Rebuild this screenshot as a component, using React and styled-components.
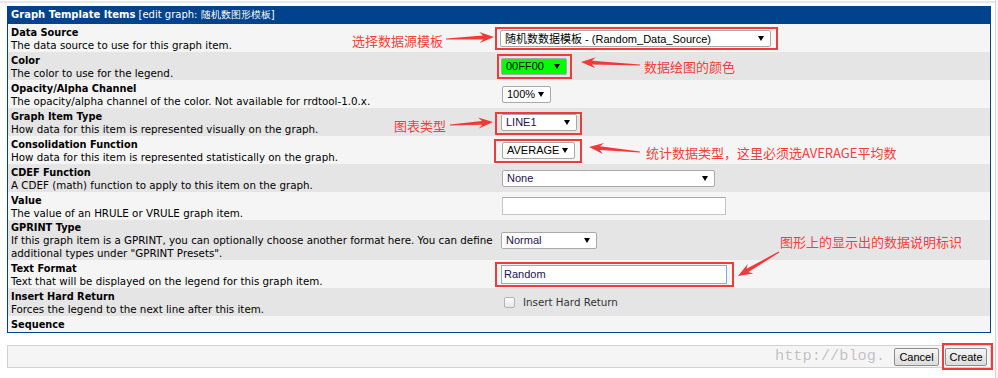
import React from 'react';
import styled, { createGlobalStyle } from 'styled-components';

const GlobalStyle = createGlobalStyle`
  html, body {
    margin: 0;
    padding: 0;
    background: #fff;
    overflow: hidden;
  }
`;

const Page = styled.div`
  position: relative;
  width: 998px;
  height: 378px;
  display: flex;
  overflow: hidden;
`;

const Main = styled.div`
  width: 995px;
  padding: 1px 0 0 7px;
  box-sizing: border-box;
`;

const ScrollTrack = styled.div`
  flex: 1;
  border-left: 1px solid #d4d4d4;
  background: #f6f6f6;
`;

const TopRule = styled.div`
  height: 2px;
  margin: 0 -3px 3px -7px;
  background: #e8e8e8;
`;

const Table = styled.div`
  width: 984px;
  box-sizing: border-box;
  border: 1px solid #00438c;
  border-top: none;
  font-family: "DejaVu Sans", Verdana, sans-serif;
  color: #000;
`;

const Header = styled.div`
  height: 18px;
  line-height: 18px;
  padding: 0 3px;
  background: #00438c;
  color: #fff;
  font-size: 10px;
  white-space: nowrap;

  b {
    font-weight: bold;
  }
`;

const Row = styled.div`
  display: grid;
  grid-template-columns: 492px 1fr;
  align-items: center;
  min-height: ${({ $short }) => ($short ? '16px' : '28px')};
  background: ${({ $dark }) => ($dark ? '#e5e5e5' : '#f5f5f5')};
`;

const Label = styled.div`
  padding: 1px 3px 0;
  line-height: 13px;
  white-space: nowrap;
`;

const Title = styled.div`
  font-weight: bold;
  font-size: 9.8px;
`;

const Desc = styled.div`
  font-size: 10.3px;
`;

const Control = styled.div`
  display: flex;
  align-items: center;
  padding-left: ${({ $pad }) => $pad ?? 1}px;
`;

const Marked = styled.div`
  position: relative;
  display: inline-flex;

  &::after {
    content: '';
    position: absolute;
    top: -${({ $t }) => $t}px;
    right: -${({ $r }) => $r}px;
    bottom: -${({ $b }) => $b}px;
    left: -${({ $l }) => $l}px;
    border: 2px solid #ef3b3b;
    pointer-events: none;
  }
`;

const SelectBox = styled.div`
  display: flex;
  align-items: center;
  justify-content: space-between;
  box-sizing: border-box;
  width: ${({ $w }) => $w}px;
  height: 17px;
  padding: 0 6px 0 4px;
  border: 1px solid #a9a9a9;
  border-radius: 2px;
  background: ${({ $bg }) => $bg || '#fff'};
  color: ${({ $ink }) => $ink || '#000'};
  font-family: "Liberation Sans", Arial, "Noto Sans CJK SC", sans-serif;
  font-size: 11px;
  white-space: nowrap;
`;

const Caret = styled.span`
  width: 0;
  height: 0;
  border-left: 3px solid transparent;
  border-right: 3px solid transparent;
  border-top: 5px solid #000;
`;

const TextInput = styled.div`
  display: flex;
  align-items: center;
  box-sizing: border-box;
  width: ${({ $w }) => $w}px;
  height: ${({ $h }) => $h}px;
  padding: 0 2px;
  background: #fff;
  border: 1px solid ${({ $focus }) => ($focus ? '#7eaee6' : '#c4c4c4')};
  border-top-color: ${({ $focus }) => ($focus ? '#7eaee6' : '#a8a8a8')};
  color: #26104d;
  font-family: "Liberation Sans", Arial, sans-serif;
  font-size: 11px;
`;

const CheckRow = styled.label`
  display: flex;
  align-items: center;
  gap: 8px;
  padding-left: 3px;
  font-size: 10.3px;
  color: #333;
`;

const CheckBox = styled.span`
  width: 9px;
  height: 9px;
  border: 1px solid #b3b3b3;
  border-radius: 2px;
  background: linear-gradient(#fdfdfd, #e6e6e6);
`;

const ActionBar = styled.div`
  display: flex;
  justify-content: flex-end;
  align-items: center;
  gap: 6px;
  width: 984px;
  height: 23px;
  margin-top: 12px;
  padding-right: 3px;
  box-sizing: border-box;
  background: #f5f5f5;
  border: 1px solid #d2d2d2;
`;

const Button = styled.div`
  display: flex;
  align-items: center;
  justify-content: center;
  height: 18px;
  width: ${({ $w }) => $w}px;
  box-sizing: border-box;
  border: 1px solid #8e8e8e;
  border-radius: 2px;
  background: linear-gradient(#f6f6f6, #dcdcdc);
  font-family: "Liberation Sans", Arial, sans-serif;
  font-size: 11px;
  color: #000;
`;

const Overlay = styled.div`
  position: absolute;
  inset: 0;
  pointer-events: none;
`;

const ArrowLayer = styled.svg`
  position: absolute;
  inset: 0;
`;

const Note = styled.div`
  position: absolute;
  left: ${({ $x }) => $x}px;
  top: ${({ $y }) => $y}px;
  font-family: "Noto Sans CJK SC", "Liberation Sans", sans-serif;
  font-size: 13px;
  line-height: 16px;
  color: #f2403f;
  white-space: nowrap;
`;

const Watermark = styled.div`
  position: absolute;
  left: 775px;
  top: 347px;
  font-family: "Liberation Mono", "Courier New", monospace;
  font-size: 15.3px;
  line-height: 18px;
  color: rgba(150, 150, 150, 0.55);
  white-space: nowrap;
`;

function arrowPoints([x1, y1], [x2, y2]) {
  const dx = x2 - x1;
  const dy = y2 - y1;
  const len = Math.hypot(dx, dy);
  const ux = dx / len;
  const uy = dy / len;
  const nx = -uy;
  const ny = ux;
  const L = 13;
  const W = 5.5;
  const bx = x2 - ux * L;
  const by = y2 - uy * L;
  const pts = [
    [x1 + nx * 0.6, y1 + ny * 0.6],
    [bx + ux * 2 + nx * 1.9, by + uy * 2 + ny * 1.9],
    [bx - ux * 1.5 + nx * W, by - uy * 1.5 + ny * W],
    [x2, y2],
    [bx - ux * 1.5 - nx * W, by - uy * 1.5 - ny * W],
    [bx + ux * 2 - nx * 1.9, by + uy * 2 - ny * 1.9],
    [x1 - nx * 0.6, y1 - ny * 0.6],
  ];
  return pts.map((p) => p.map((v) => v.toFixed(1)).join(',')).join(' ');
}

const arrows = [
  [[446, 39], [494, 37]],
  [[640, 65], [581, 62]],
  [[450, 125], [493, 122]],
  [[640, 152], [589, 147]],
  [[779, 252], [738, 276]],
];

const notes = [
  { x: 352, y: 33, text: '选择数据源模板' },
  { x: 644, y: 59, text: '数据绘图的颜色' },
  { x: 394, y: 118, text: '图表类型' },
  { x: 646, y: 145, text: '统计数据类型，这里必须选AVERAGE平均数' },
  { x: 780, y: 234, text: '图形上的显示出的数据说明标识' },
];

const Select = ({ w, bg, ink, children }) => (
  <SelectBox $w={w} $bg={bg} $ink={ink}>
    <span>{children}</span>
    <Caret />
  </SelectBox>
);

const App = () => {
  return (
    <Page>
      <GlobalStyle />
      <Main>
        <TopRule />
        <Table>
          <Header>
            <b>Graph Template Items</b> [edit graph: 随机数图形模板]
          </Header>

          <Row>
            <Label>
              <Title>Data Source</Title>
              <Desc>The data source to use for this graph item.</Desc>
            </Label>
            <Control $pad={0}>
              <Marked $t={3} $r={7} $b={3} $l={5}>
                <Select w={271}>随机数数据模板 - (Random_Data_Source)</Select>
              </Marked>
            </Control>
          </Row>

          <Row $dark>
            <Label>
              <Title>Color</Title>
              <Desc>The color to use for the legend.</Desc>
            </Label>
            <Control>
              <Marked $t={4} $r={5} $b={4} $l={4}>
                <Select w={66} bg="#00ff00">00FF00</Select>
              </Marked>
            </Control>
          </Row>

          <Row>
            <Label>
              <Title>Opacity/Alpha Channel</Title>
              <Desc>The opacity/alpha channel of the color. Not available for rrdtool-1.0.x.</Desc>
            </Label>
            <Control $pad={2}>
              <Select w={49}>100%</Select>
            </Control>
          </Row>

          <Row $dark>
            <Label>
              <Title>Graph Item Type</Title>
              <Desc>How data for this item is represented visually on the graph.</Desc>
            </Label>
            <Control>
              <Marked $t={2} $r={5} $b={4} $l={6}>
                <Select w={76} ink="#26104d">LINE1</Select>
              </Marked>
            </Control>
          </Row>

          <Row>
            <Label>
              <Title>Consolidation Function</Title>
              <Desc>How data for this item is represented statistically on the graph.</Desc>
            </Label>
            <Control $pad={2}>
              <Marked $t={3} $r={7} $b={4} $l={8}>
                <Select w={73}>AVERAGE</Select>
              </Marked>
            </Control>
          </Row>

          <Row $dark>
            <Label>
              <Title>CDEF Function</Title>
              <Desc>A CDEF (math) function to apply to this item on the graph.</Desc>
            </Label>
            <Control $pad={2}>
              <Select w={213} ink="#26104d">None</Select>
            </Control>
          </Row>

          <Row>
            <Label>
              <Title>Value</Title>
              <Desc>The value of an HRULE or VRULE graph item.</Desc>
            </Label>
            <Control $pad={2}>
              <TextInput $w={224} $h={18} />
            </Control>
          </Row>

          <Row $dark>
            <Label>
              <Title>GPRINT Type</Title>
              <Desc>
                If this graph item is a GPRINT, you can optionally choose another format here. You can define
                <br />
                additional types under "GPRINT Presets".
              </Desc>
            </Label>
            <Control>
              <Select w={96} ink="#26104d">Normal</Select>
            </Control>
          </Row>

          <Row>
            <Label>
              <Title>Text Format</Title>
              <Desc>Text that will be displayed on the legend for this graph item.</Desc>
            </Label>
            <Control>
              <Marked $t={3} $r={7} $b={3} $l={6}>
                <TextInput $w={226} $h={19} $focus>Random</TextInput>
              </Marked>
            </Control>
          </Row>

          <Row $dark>
            <Label>
              <Title>Insert Hard Return</Title>
              <Desc>Forces the legend to the next line after this item.</Desc>
            </Label>
            <Control>
              <CheckRow>
                <CheckBox />
                Insert Hard Return
              </CheckRow>
            </Control>
          </Row>

          <Row $short>
            <Label>
              <Title>Sequence</Title>
            </Label>
          </Row>
        </Table>

        <ActionBar>
          <Button $w={45}>Cancel</Button>
          <Marked $t={5} $r={6} $b={4} $l={3}>
            <Button $w={42}>Create</Button>
          </Marked>
        </ActionBar>
      </Main>
      <ScrollTrack />

      <Overlay>
        <ArrowLayer width="998" height="378" viewBox="0 0 998 378">
          {arrows.map(([a, b], i) => (
            <polygon key={i} points={arrowPoints(a, b)} fill="#f03a3a" />
          ))}
        </ArrowLayer>
        {notes.map((n) => (
          <Note key={n.text} $x={n.x} $y={n.y}>
            {n.text}
          </Note>
        ))}
        <Watermark>http://blog.</Watermark>
      </Overlay>
    </Page>
  );
};

export default App;
